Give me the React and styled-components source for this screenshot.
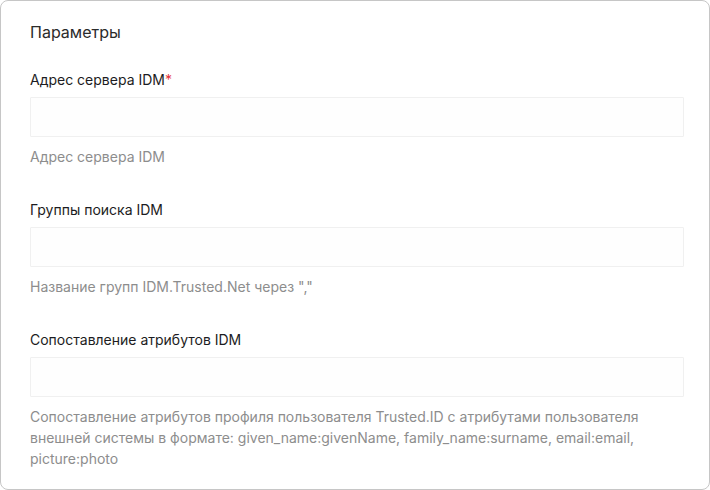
import React from 'react'
import styled, { createGlobalStyle } from 'styled-components'

const GlobalStyle = createGlobalStyle`
  html, body {
    margin: 0;
    padding: 0;
    background: #fff;
  }
  body {
    font-family: Inter, "Noto Sans", "Liberation Sans", sans-serif;
    -webkit-font-smoothing: antialiased;
  }
`

const Card = styled.div`
  box-sizing: border-box;
  width: 710px;
  height: 490px;
  border: 1px solid #c6c6c6;
  border-radius: 8px;
  background: #fff;
  padding: 19px 25px 20px 29px;
  display: flex;
  flex-direction: column;
`

const Title = styled.div`
  font-size: 16px;
  line-height: 24px;
  color: #2b2b2b;
  margin-bottom: 26px;
`

const Field = styled.div`
  display: flex;
  flex-direction: column;
  margin-bottom: 33px;
  &:last-child {
    margin-bottom: 0;
  }
`

const Label = styled.label`
  font-size: 14px;
  line-height: 20px;
  color: #1c1c22;
  margin-bottom: 7px;
`

const Required = styled.span`
  color: #e5353c;
`

const Input = styled.input`
  box-sizing: border-box;
  width: 100%;
  height: 40px;
  border: 1px solid #f0f0f0;
  border-radius: 1px;
  background: #fefefe;
  outline: none;
  padding: 0 12px;
  font-family: inherit;
  font-size: 14px;
  margin-bottom: 9px;
`

const Hint = styled.div`
  font-size: 14px;
  line-height: 21px;
  color: #8d8d8d;
`

const fields = [
  { label: 'Адрес сервера IDM', required: true, hint: 'Адрес сервера IDM' },
  { label: 'Группы поиска IDM', hint: 'Название групп IDM.Trusted.Net через ","' },
  {
    label: 'Сопоставление атрибутов IDM',
    hint: 'Сопоставление атрибутов профиля пользователя Trusted.ID с атрибутами пользователя внешней системы в формате: given_name:givenName, family_name:surname, email:email, picture:photo',
  },
]

export default function App() {
  return (
    <>
      <GlobalStyle />
      <Card>
        <Title>Параметры</Title>
        {fields.map((f, i) => (
          <Field key={i}>
            <Label>
              {f.label}
              {f.required && <Required>*</Required>}
            </Label>
            <Input />
            <Hint>{f.hint}</Hint>
          </Field>
        ))}
      </Card>
    </>
  )
}
